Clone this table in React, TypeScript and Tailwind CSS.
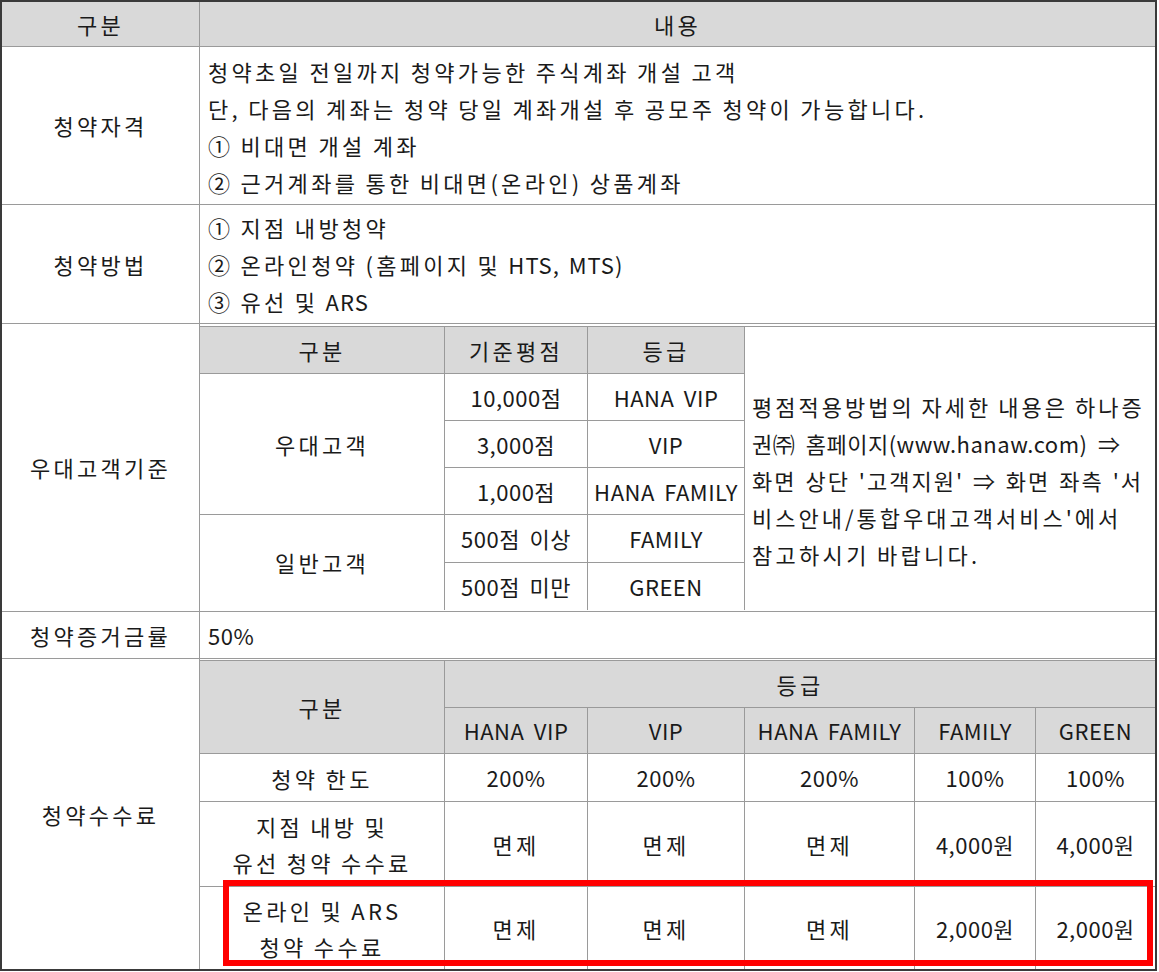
const cell = 'flex items-center justify-center text-center border-[#9a9a9a]';
const head = 'bg-[#d9d9d9]';
// Latin and number cells keep tight spacing, Korean text gets the wider pitch
const latin = 'tracking-[0.5px] [word-spacing:4px]';

function GradeTable() {
  return (
    <div className="mt-[2px] grid grid-cols-[245px_143px_157px_1fr] grid-rows-[47px_47px_47px_47px_48px_47px] border-t border-[#9a9a9a]">
      <div className={`${cell} ${head} border-r border-b`}>구분</div>
      <div className={`${cell} ${head} border-r border-b`}>기준평점</div>
      <div className={`${cell} ${head} border-r border-b`}>등급</div>
      <div className="row-span-6 flex flex-col justify-center pl-[7px] pt-[24px] leading-[37px] whitespace-nowrap">
        <span className="tracking-[3px]">평점적용방법의 자세한 내용은 하나증</span>
        <span className="tracking-[0.5px] [word-spacing:5px]">권㈜ 홈페이지(www.hanaw.com) ⇒</span>
        <span className="tracking-[2px] [word-spacing:2px]">화면 상단 &#39;고객지원&#39; ⇒ 화면 좌측 &#39;서</span>
        <span className="tracking-[3px]">비스안내/통합우대고객서비스&#39;에서</span>
        <span>참고하시기 바랍니다.</span>
      </div>
      <div className={`${cell} row-span-3 border-r border-b`}>우대고객</div>
      <div className={`${cell} ${latin} border-r border-b`}>10,000점</div>
      <div className={`${cell} ${latin} border-r border-b`}>HANA VIP</div>
      <div className={`${cell} ${latin} border-r border-b`}>3,000점</div>
      <div className={`${cell} ${latin} border-r border-b`}>VIP</div>
      <div className={`${cell} ${latin} border-r border-b`}>1,000점</div>
      <div className={`${cell} ${latin} border-r border-b`}>HANA FAMILY</div>
      <div className={`${cell} row-span-2 border-r`}>일반고객</div>
      <div className={`${cell} ${latin} border-r border-b`}>500점 이상</div>
      <div className={`${cell} ${latin} border-r border-b`}>FAMILY</div>
      <div className={`${cell} ${latin} border-r`}>500점 미만</div>
      <div className={`${cell} ${latin} border-r`}>GREEN</div>
    </div>
  );
}

const grades = ['HANA VIP', 'VIP', 'HANA FAMILY', 'FAMILY', 'GREEN'];
const feeRows = [
  { label: ['청약 한도'], values: ['200%', '200%', '200%', '100%', '100%'] },
  { label: ['지점 내방 및', '유선 청약 수수료'], values: ['면제', '면제', '면제', '4,000원', '4,000원'] },
  { label: ['온라인 및 ARS', '청약 수수료'], values: ['면제', '면제', '면제', '2,000원', '2,000원'] },
];

function FeeTable() {
  return (
    <div className="mt-[1px] grid h-[calc(100%-1px)] grid-cols-[245px_143px_157px_170px_121px_1fr] grid-rows-[47px_46px_48px_85px_1fr] border-t border-[#9a9a9a]">
      <div className={`${cell} ${head} row-span-2 border-r border-b`}>구분</div>
      <div className={`${cell} ${head} col-span-5 border-b`}>등급</div>
      {grades.map((g, i) => (
        <div key={g} className={`${cell} ${head} ${latin} border-b ${i < 4 ? 'border-r' : ''}`}>
          {g}
        </div>
      ))}
      {feeRows.map((row, r) => (
        <>
          <div
            key={`l${r}`}
            className={`${cell} flex-col leading-[36px] border-r ${r < 2 ? 'border-b' : ''}`}
          >
            {row.label.map((t) => (
              <span key={t}>{t}</span>
            ))}
          </div>
          {row.values.map((v, i) => (
            <div
              key={`v${r}${i}`}
              className={`${cell} ${v === '면제' ? '' : latin} ${r < 2 ? 'border-b' : ''} ${i < 4 ? 'border-r' : ''}`}
            >
              {v}
            </div>
          ))}
        </>
      ))}
    </div>
  );
}

export default function App() {
  return (
    <div className="relative h-[971px] w-[1157px] border-2 border-[#3a3a3a] bg-white font-['Noto_Sans_CJK_KR',sans-serif] text-[22px] tracking-[3.3px] text-[#1a1a1a] [word-spacing:-1px]">
      <div className="flex h-[45px] border-b border-[#9a9a9a] bg-[#d9d9d9]">
        <div className="flex w-[198px] items-center justify-center border-r border-[#9a9a9a]">구분</div>
        <div className="flex flex-1 items-center justify-center">내용</div>
      </div>

      <div className="flex h-[158px] border-b border-[#9a9a9a]">
        <div className="flex w-[198px] items-center justify-center border-r border-[#9a9a9a]">청약자격</div>
        <div className="flex flex-1 flex-col justify-center pl-2 pt-[3px] leading-[37px]">
          <span>청약초일 전일까지 청약가능한 주식계좌 개설 고객</span>
          <span>단, 다음의 계좌는 청약 당일 계좌개설 후 공모주 청약이 가능합니다.</span>
          <span>① 비대면 개설 계좌</span>
          <span>② 근거계좌를 통한 비대면(온라인) 상품계좌</span>
        </div>
      </div>

      <div className="flex h-[119px] border-b border-[#9a9a9a]">
        <div className="flex w-[198px] items-center justify-center border-r border-[#9a9a9a]">청약방법</div>
        <div className="flex flex-1 flex-col justify-center pl-2 leading-[37px]">
          <span>① 지점 내방청약</span>
          <span>
            ② 온라인청약 (홈페이지 및 <span className="tracking-[1px] [word-spacing:3px]">HTS, MTS)</span>
          </span>
          <span>
            ③ 유선 및 <span className="tracking-[1px]">ARS</span>
          </span>
        </div>
      </div>

      <div className="flex h-[288px] border-b border-[#9a9a9a]">
        <div className="flex w-[198px] items-center justify-center border-r border-[#9a9a9a]">우대고객기준</div>
        <div className="flex-1">
          <GradeTable />
        </div>
      </div>

      <div className="flex h-[47px] border-b border-[#9a9a9a]">
        <div className="flex w-[198px] items-center justify-center border-r border-[#9a9a9a]">청약증거금률</div>
        <div className={`flex flex-1 items-center pl-2 ${latin}`}>50%</div>
      </div>

      <div className="flex h-[310px]">
        <div className="flex w-[198px] items-center justify-center border-r border-[#9a9a9a]">청약수수료</div>
        <div className="flex-1">
          <FeeTable />
        </div>
      </div>

      <div className="pointer-events-none absolute left-[221px] top-[878px] h-[86px] w-[930px] border-[6px] border-[#ff0000]" />
    </div>
  );
}
